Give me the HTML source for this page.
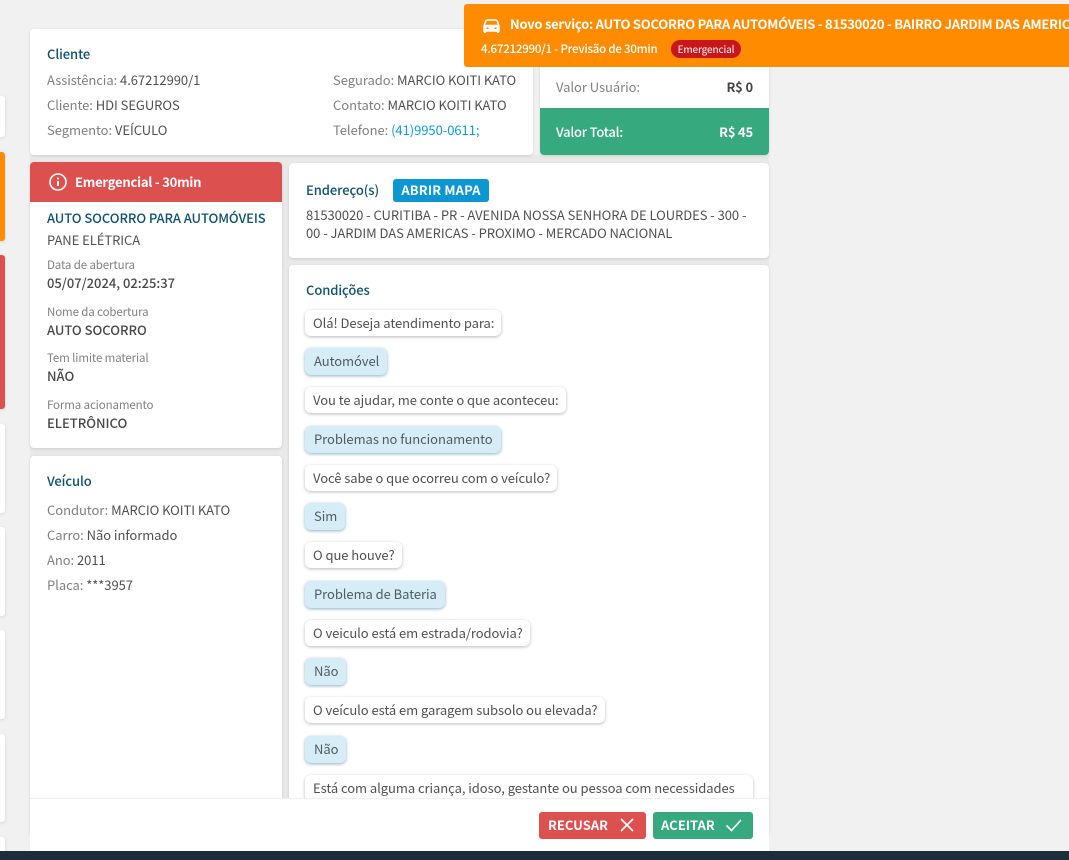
<!DOCTYPE html>
<html lang="pt-BR">
<head>
<meta charset="utf-8">
<title>Novo serviço</title>
<style>
html,body{margin:0;padding:0;width:1069px;height:860px;overflow:hidden;background:#f1f1f1}
body{position:relative;font-family:"Noto Sans CJK JP","Liberation Sans",sans-serif;font-size:13px;color:#505050;letter-spacing:-.05px}
.box{position:absolute;background:#fff;border-radius:4px;box-shadow:0 1px 3px rgba(0,0,0,.12)}
.t{position:absolute;white-space:nowrap;line-height:18px;height:18px}
.h{color:#10516f;font-weight:500;letter-spacing:-.08px}
.g{color:#808080}
.small{font-size:11.5px;color:#808080;letter-spacing:-.12px}
.b{font-weight:500;color:#484848;letter-spacing:-.02px}
.bub{position:absolute;left:305px;height:26px;line-height:25px;padding:0 7px 0 8px;background:#fff;border-radius:6px;box-shadow:0 1px 3px rgba(0,0,0,.28);white-space:nowrap;box-sizing:border-box;color:#505050;letter-spacing:-.06px}
.bub.a{background:#d6edf8;height:27px;line-height:26px;padding:0 8px 0 9px;box-shadow:0 1px 3px rgba(0,80,120,.45);color:#4f5b60}
.side{position:absolute;left:0;width:5px;background:#fff;border-radius:0 3px 3px 0;box-shadow:0 1px 3px rgba(0,0,0,.12)}
</style>
</head>
<body>
<div class="side" style="top:96px;height:41px"></div>
<div class="side" style="top:152px;height:89px;background:#ff8c00"></div>
<div class="side" style="top:255px;height:154px;background:#dc5050"></div>
<div class="side" style="top:424px;height:89px"></div>
<div class="side" style="top:527px;height:89px"></div>
<div class="side" style="top:630px;height:89px"></div>
<div class="side" style="top:734px;height:88px"></div>
<div class="side" style="top:837px;height:20px"></div>

<div style="position:absolute;left:30px;top:155px;width:739px;height:643px;background:#e9e9e9"></div>

<div class="box" style="left:30px;top:29px;width:503px;height:126px"></div>
<div class="t h" style="left:47px;top:45px">Cliente</div>
<div class="t" style="left:47px;top:71px"><span class="g">Assistência:</span> 4.67212990/1</div>
<div class="t" style="left:47px;top:96px"><span class="g">Cliente:</span> HDI SEGUROS</div>
<div class="t" style="left:47px;top:121px"><span class="g">Segmento:</span> VEÍCULO</div>
<div class="t" style="left:333px;top:71px"><span class="g">Segurado:</span> MARCIO KOITI KATO</div>
<div class="t" style="left:333px;top:96px"><span class="g">Contato:</span> MARCIO KOITI KATO</div>
<div class="t" style="left:333px;top:121px"><span class="g">Telefone:</span> <span style="color:#0f9bd0">(41)9950-0611;</span></div>

<div class="box" style="left:540px;top:29px;width:229px;height:126px"></div>
<div class="t g" style="left:556px;top:78px">Valor Usuário:</div>
<div class="t" style="right:316px;top:78px;font-weight:700;color:#444;letter-spacing:-.15px">R$ 0</div>
<div style="position:absolute;left:540px;top:108px;width:229px;height:47px;background:#36a97f;border-radius:0 0 4px 4px"></div>
<div class="t" style="left:556px;top:123px;color:#fff;font-weight:500;letter-spacing:-.22px">Valor Total:</div>
<div class="t" style="right:316px;top:123px;color:#fff;font-weight:700;letter-spacing:-.2px">R$ 45</div>

<div class="box" style="left:30px;top:162px;width:252px;height:286px"></div>
<div style="position:absolute;left:30px;top:162px;width:252px;height:40px;background:#dc5050;border-radius:4px 4px 0 0"></div>
<svg style="position:absolute;left:48px;top:172px" width="20" height="20" viewBox="0 0 20 20" fill="none" stroke="#fff" stroke-width="1.6"><circle cx="10" cy="10" r="8"/><path d="M10 9v5" stroke-width="2"/><path d="M10 5.6v1.8" stroke-width="2"/></svg>
<div class="t" style="left:75px;top:173px;color:#fff;font-weight:700;letter-spacing:-.22px">Emergencial - 30min</div>
<div class="t h" style="left:47px;top:209px">AUTO SOCORRO PARA AUTOMÓVEIS</div>
<div class="t" style="left:47px;top:231px">PANE ELÉTRICA</div>
<div class="t small" style="left:47px;top:256px">Data de abertura</div>
<div class="t b" style="left:47px;top:274px">05/07/2024, 02:25:37</div>
<div class="t small" style="left:47px;top:303px">Nome da cobertura</div>
<div class="t b" style="left:47px;top:321px">AUTO SOCORRO</div>
<div class="t small" style="left:47px;top:349px">Tem limite material</div>
<div class="t b" style="left:47px;top:367px">NÃO</div>
<div class="t small" style="left:47px;top:396px">Forma acionamento</div>
<div class="t b" style="left:47px;top:414px">ELETRÔNICO</div>

<div class="box" style="left:30px;top:456px;width:252px;height:380px"></div>
<div class="t h" style="left:47px;top:472px">Veículo</div>
<div class="t" style="left:47px;top:501px"><span class="g">Condutor:</span> MARCIO KOITI KATO</div>
<div class="t" style="left:47px;top:526px"><span class="g">Carro:</span> Não informado</div>
<div class="t" style="left:47px;top:551px"><span class="g">Ano:</span> 2011</div>
<div class="t" style="left:47px;top:576px"><span class="g">Placa:</span> ***3957</div>

<div class="box" style="left:289px;top:163px;width:480px;height:95px"></div>
<div class="t h" style="left:306px;top:181px">Endereço(s)</div>
<div style="position:absolute;left:393px;top:179px;width:96px;height:23px;line-height:22px;background:#0c97d2;color:#fff;border-radius:3px;font-weight:700;text-align:center;white-space:nowrap;letter-spacing:.15px">ABRIR MAPA</div>
<div class="t" style="left:306px;top:206px">81530020 - CURITIBA - PR - AVENIDA NOSSA SENHORA DE LOURDES - 300 -</div>
<div class="t" style="left:306px;top:224px">00 - JARDIM DAS AMERICAS - PROXIMO - MERCADO NACIONAL</div>

<div class="box" style="left:289px;top:265px;width:480px;height:570px"></div>
<div class="t h" style="left:306px;top:281px">Condições</div>
<div class="bub" style="top:310px">Olá! Deseja atendimento para:</div>
<div class="bub a" style="top:348px">Automóvel</div>
<div class="bub" style="top:387px">Vou te ajudar, me conte o que aconteceu:</div>
<div class="bub a" style="top:426px">Problemas no funcionamento</div>
<div class="bub" style="top:465px">Você sabe o que ocorreu com o veículo?</div>
<div class="bub a" style="top:503px">Sim</div>
<div class="bub" style="top:542px">O que houve?</div>
<div class="bub a" style="top:581px">Problema de Bateria</div>
<div class="bub" style="top:620px">O veiculo está em estrada/rodovia?</div>
<div class="bub a" style="top:658px">Não</div>
<div class="bub" style="top:697px">O veículo está em garagem subsolo ou elevada?</div>
<div class="bub a" style="top:736px">Não</div>
<div class="bub" style="top:775px;height:50px;width:448px">Está com alguma criança, idoso, gestante ou pessoa com necessidades</div>

<div style="position:absolute;left:30px;top:798px;width:739px;height:53px;background:#fff;border-top:1px solid #eee;box-sizing:border-box"></div>
<div style="position:absolute;left:539px;top:812px;width:107px;height:27px;background:#dc5050;border-radius:3px"></div>
<div class="t" style="left:548px;top:816px;color:#fff;font-weight:700;letter-spacing:0">RECUSAR</div>
<svg style="position:absolute;left:619px;top:817px" width="16" height="16" viewBox="0 0 16 16" fill="none" stroke="#fff" stroke-width="1.6"><path d="M2 2l12 12M14 2L2 14"/></svg>
<div style="position:absolute;left:653px;top:812px;width:100px;height:27px;background:#36a97f;border-radius:3px"></div>
<div class="t" style="left:661px;top:816px;color:#fff;font-weight:700;letter-spacing:0">ACEITAR</div>
<svg style="position:absolute;left:725px;top:817px" width="17" height="16" viewBox="0 0 17 16" fill="none" stroke="#fff" stroke-width="1.6"><path d="M1.5 8.5l5 5L16 3"/></svg>

<div style="position:absolute;left:0;top:851px;width:1069px;height:9px;background:#1c2e38"></div>

<div style="position:absolute;left:464px;top:4px;width:605px;height:63px;background:#ff8c00;border-radius:3px 0 0 3px;overflow:hidden">
  <svg style="position:absolute;left:19px;top:15px" width="17" height="15" viewBox="0 0 17 15" fill="none" stroke="#fff" stroke-width="1.5"><path d="M1 7l1.6-4.6C3 1.500 3.700 1 4.600 1h7.800c.9 0 1.600.5 2 1.400L16 7"/><path d="M1.800 6.500h13.400c.5 0 .8.400.8.800v4.700H1V7.300c0-.4.300-.8.800-.8z" fill="#fff"/><path d="M2 12v2M15 12v2" stroke-width="2.200"/><path d="M3.500 9.300h2M11.500 9.300h2" stroke="#ff8c00" stroke-width="1.500"/></svg>
  <div class="t" style="left:46px;top:11px;color:#fff;font-weight:700;letter-spacing:-.26px">Novo serviço: AUTO SOCORRO PARA AUTOMÓVEIS - 81530020 - BAIRRO JARDIM DAS AMERICAS</div>
  <div class="t" style="left:17px;top:36px;color:#fff;font-size:11.5px;font-weight:500;letter-spacing:-.22px">4.67212990/1 - Previsão de 30min</div>
  <div style="position:absolute;left:207px;top:36px;width:70px;height:18px;line-height:17px;background:#c8161d;color:#fff;border-radius:9px;text-align:center;font-size:10px;white-space:nowrap;letter-spacing:-.1px">Emergencial</div>
</div>
</body>
</html>
